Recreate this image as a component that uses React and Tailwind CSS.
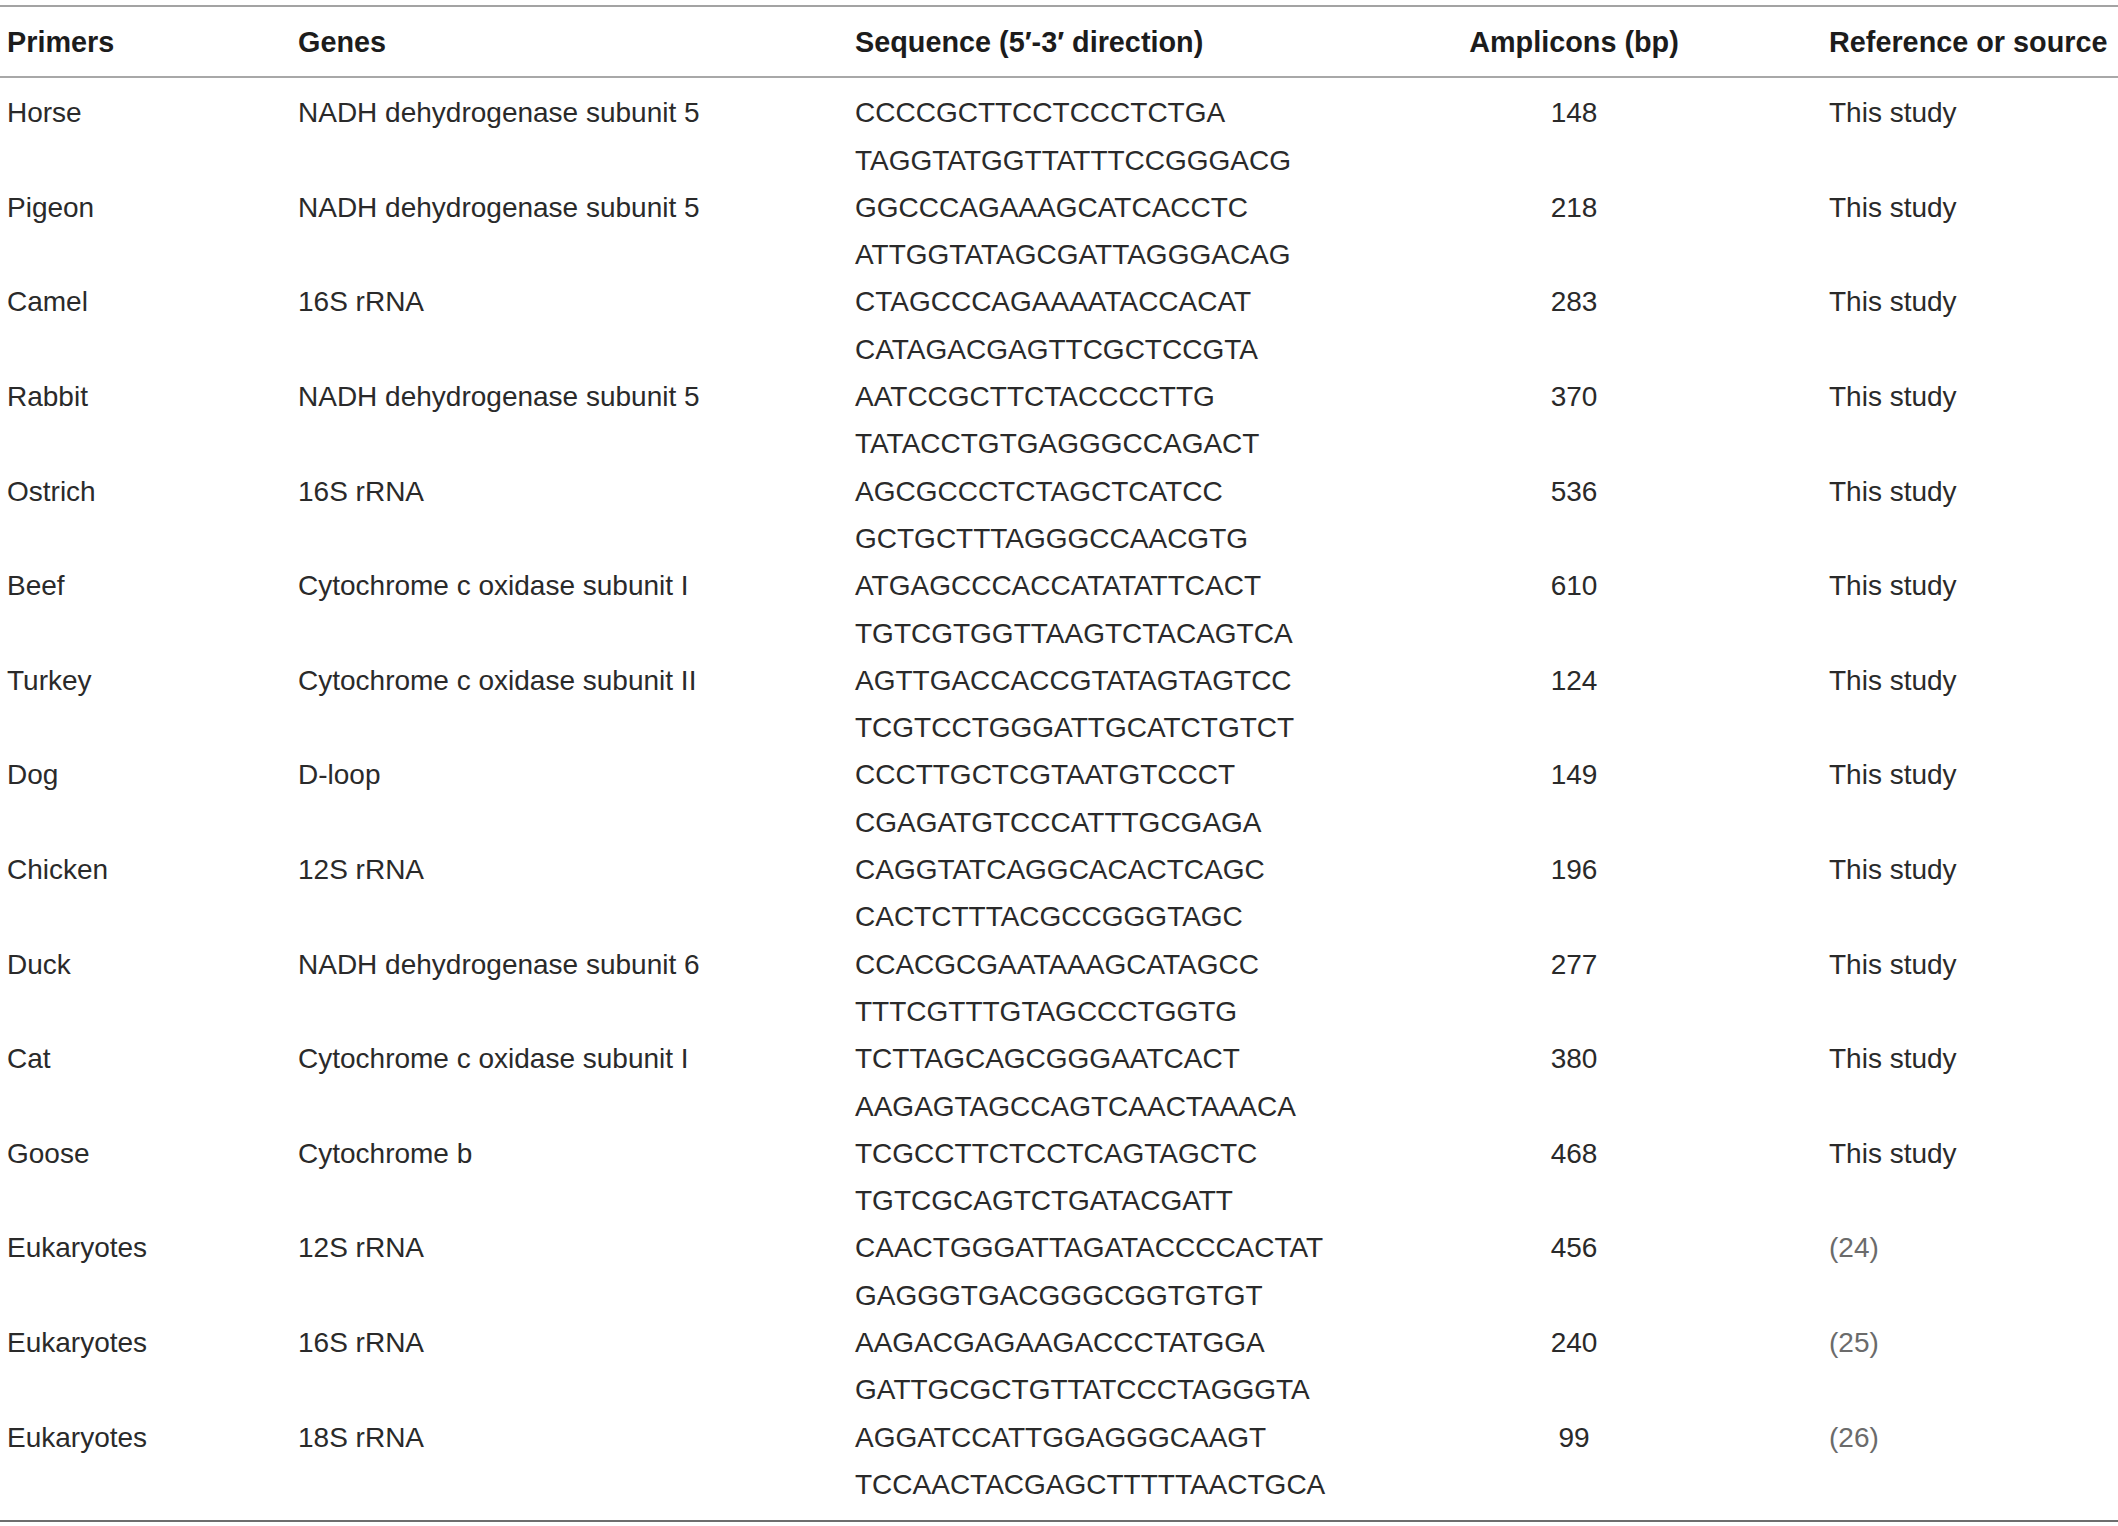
import React from "react";

const rows = [
  ["Horse", "NADH dehydrogenase subunit 5", "CCCCGCTTCCTCCCTCTGA", "TAGGTATGGTTATTTCCGGGACG", "148", "This study"],
  ["Pigeon", "NADH dehydrogenase subunit 5", "GGCCCAGAAAGCATCACCTC", "ATTGGTATAGCGATTAGGGACAG", "218", "This study"],
  ["Camel", "16S rRNA", "CTAGCCCAGAAAATACCACAT", "CATAGACGAGTTCGCTCCGTA", "283", "This study"],
  ["Rabbit", "NADH dehydrogenase subunit 5", "AATCCGCTTCTACCCCTTG", "TATACCTGTGAGGGCCAGACT", "370", "This study"],
  ["Ostrich", "16S rRNA", "AGCGCCCTCTAGCTCATCC", "GCTGCTTTAGGGCCAACGTG", "536", "This study"],
  ["Beef", "Cytochrome c oxidase subunit I", "ATGAGCCCACCATATATTCACT", "TGTCGTGGTTAAGTCTACAGTCA", "610", "This study"],
  ["Turkey", "Cytochrome c oxidase subunit II", "AGTTGACCACCGTATAGTAGTCC", "TCGTCCTGGGATTGCATCTGTCT", "124", "This study"],
  ["Dog", "D-loop", "CCCTTGCTCGTAATGTCCCT", "CGAGATGTCCCATTTGCGAGA", "149", "This study"],
  ["Chicken", "12S rRNA", "CAGGTATCAGGCACACTCAGC", "CACTCTTTACGCCGGGTAGC", "196", "This study"],
  ["Duck", "NADH dehydrogenase subunit 6", "CCACGCGAATAAAGCATAGCC", "TTTCGTTTGTAGCCCTGGTG", "277", "This study"],
  ["Cat", "Cytochrome c oxidase subunit I", "TCTTAGCAGCGGGAATCACT", "AAGAGTAGCCAGTCAACTAAACA", "380", "This study"],
  ["Goose", "Cytochrome b", "TCGCCTTCTCCTCAGTAGCTC", "TGTCGCAGTCTGATACGATT", "468", "This study"],
  ["Eukaryotes", "12S rRNA", "CAACTGGGATTAGATACCCCACTAT", "GAGGGTGACGGGCGGTGTGT", "456", "(24)"],
  ["Eukaryotes", "16S rRNA", "AAGACGAGAAGACCCTATGGA", "GATTGCGCTGTTATCCCTAGGGTA", "240", "(25)"],
  ["Eukaryotes", "18S rRNA", "AGGATCCATTGGAGGGCAAGT", "TCCAACTACGAGCTTTTTAACTGCA", "99", "(26)"],
];

const grid = "grid grid-cols-[291px_557px_478px_496px_1fr]";

export default function App() {
  return (
    <div className="w-[2118px] h-[1526px] bg-white pt-[5px] text-[28px] text-[#2a2a2a] font-['Liberation_Sans',Arial,sans-serif]">
      <div className="h-[2px] bg-[#a3a3a3]" />
      <div className={`${grid} pt-[12px] pb-[10px] leading-[47.3px] text-[28.8px] font-bold text-[#1c1c1c]`}>
        <div className="pl-[7px]">Primers</div>
        <div className="pl-[7px]">Genes</div>
        <div className="pl-[7px]">Sequence (5′-3′ direction)</div>
        <div className="text-center">Amplicons (bp)</div>
        <div className="pl-[7px] whitespace-nowrap">Reference or source</div>
      </div>
      <div className="h-[2px] bg-[#a8a8a8]" />
      <div className="pt-[11px] pb-[12px] leading-[47.3px]">
        {rows.map((r, i) => (
          <div key={i} className={grid}>
            <div className="pl-[7px]">{r[0]}</div>
            <div className="pl-[7px]">{r[1]}</div>
            <div className="pl-[7px] flex flex-col">
              <span>{r[2]}</span>
              <span>{r[3]}</span>
            </div>
            <div className="text-center">{r[4]}</div>
            <div className={r[5].startsWith("(") ? "pl-[7px] text-[#6b6b6b]" : "pl-[7px]"}>{r[5]}</div>
          </div>
        ))}
      </div>
      <div className="h-[2px] bg-[#6e6e6e]" />
    </div>
  );
}
